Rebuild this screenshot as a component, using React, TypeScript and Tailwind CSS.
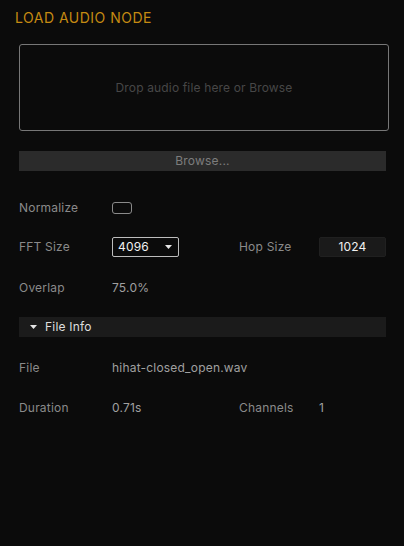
import React from "react";

const font = { fontFamily: "Inter, 'Noto Sans', sans-serif" };

function Row({ children, className = "" }: { children: React.ReactNode; className?: string }) {
  return <div className={`flex items-center h-[20px] text-[12px] tracking-[0.2px] ${className}`}>{children}</div>;
}

export default function App() {
  return (
    <div className="w-[404px] h-[546px] bg-[#0b0b0b] overflow-hidden" style={font}>
      <div className="pt-[8px] pl-[15px] h-[28px] text-[14px] tracking-[0.5px] leading-[20px] text-[#c58a12]">LOAD AUDIO NODE</div>
      <div className="pl-[19px] pr-[16px]">
        <div className="mt-[16px] w-[370px] h-[87px] border border-[#777] rounded-[3px] flex items-center justify-center text-[12px] tracking-[0.15px] text-[#474747]">
          Drop audio file here or Browse
        </div>
        <div className="mt-[20px] w-[367px] h-[20px] bg-[#2b2b2b] flex items-center justify-center text-[12px] tracking-[0.2px] text-[#7d7d7d]">
          Browse...
        </div>
        <Row className="mt-[27px]">
          <div className="w-[93px] text-[#8a8a8a]">Normalize</div>
          <div className="w-[20px] h-[12px] border border-[#8a8a8a] rounded-[3px]" />
        </Row>
        <Row className="mt-[19px]">
          <div className="w-[93px] text-[#8a8a8a]">FFT Size</div>
          <div className="w-[67px] h-[20px] border border-[#bdbdbd] rounded-[2px] flex items-center justify-between pl-[5px] pr-[6px] text-[#f0f0f0]">
            <span className="text-[12px]">4096</span>
            <svg width="7" height="4" viewBox="0 0 7 4"><path d="M0 0 H7 L3.5 4 Z" fill="#e6e6e6" /></svg>
          </div>
          <div className="w-[60px]" />
          <div className="w-[80px] text-[#8a8a8a]">Hop Size</div>
          <div className="w-[67px] h-[20px] bg-[#1a1a1a] border border-[#202020] rounded-[2px] flex items-center justify-center text-[#f0f0f0]">
            1024
          </div>
        </Row>
        <Row className="mt-[21px]">
          <div className="w-[93px] text-[#8a8a8a]">Overlap</div>
          <div className="text-[#a0a0a0]">75.0%</div>
        </Row>
        <div className="mt-[19px] w-[367px] h-[20px] bg-[#1b1b1b] flex items-center text-[12px] tracking-[0.2px] text-[#dedede]">
          <svg className="ml-[11px]" width="7" height="4" viewBox="0 0 7 4"><path d="M0 0 H7 L3.5 4 Z" fill="#e6e6e6" /></svg>
          <span className="ml-[8px]">File Info</span>
        </div>
        <Row className="mt-[21px]">
          <div className="w-[93px] text-[#8a8a8a]">File</div>
          <div className="text-[#a0a0a0]">hihat-closed_open.wav</div>
        </Row>
        <Row className="mt-[20px]">
          <div className="w-[93px] text-[#8a8a8a]">Duration</div>
          <div className="w-[127px] text-[#a0a0a0]">0.71s</div>
          <div className="w-[80px] text-[#8a8a8a]">Channels</div>
          <div className="text-[#a0a0a0]">1</div>
        </Row>
      </div>
    </div>
  );
}
